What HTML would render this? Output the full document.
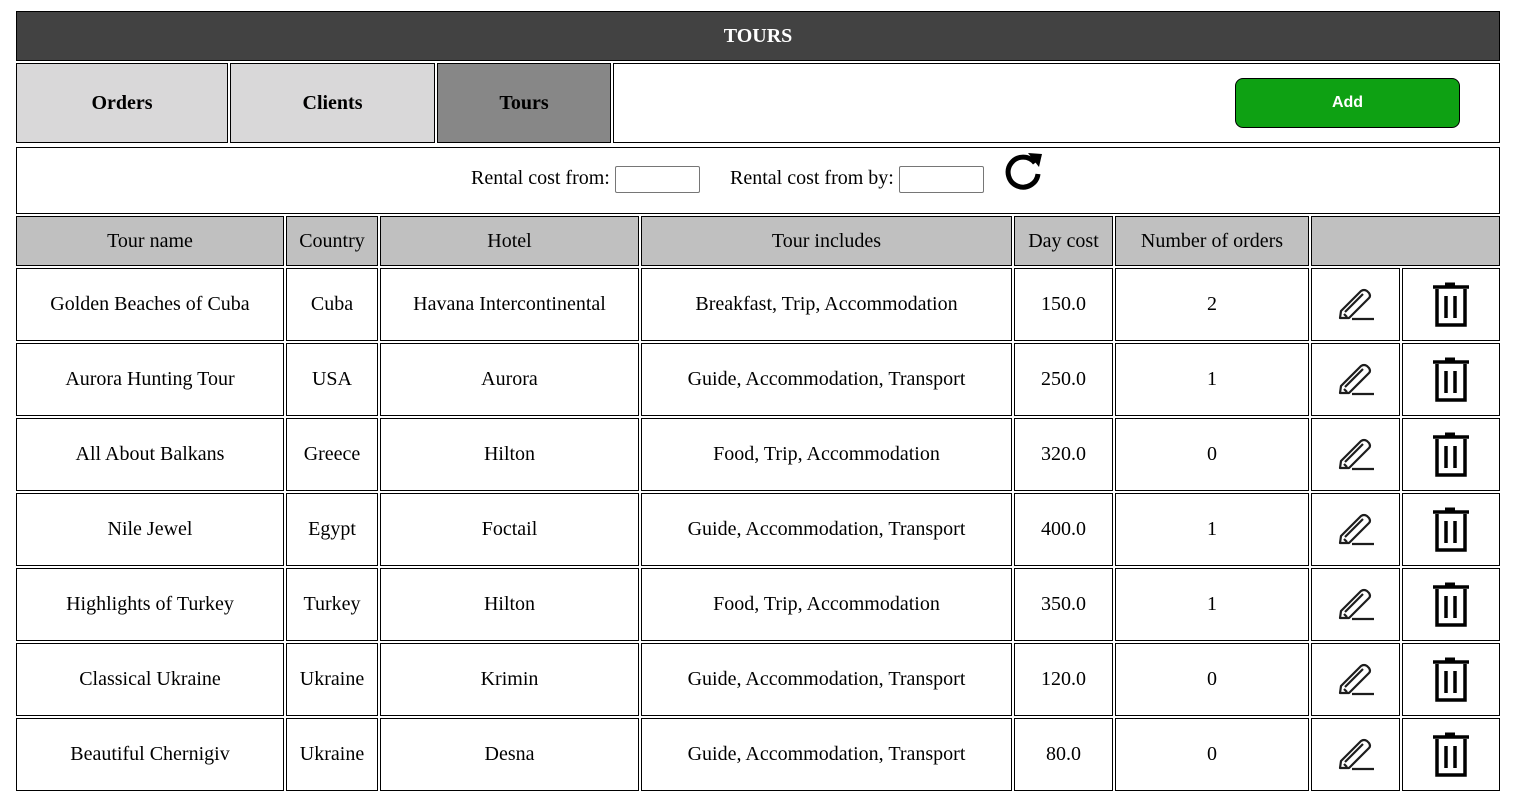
<!DOCTYPE html>
<html><head><meta charset="utf-8"><style>
body{margin:0;width:1513px;height:804px;background:#fff;position:relative;overflow:hidden;font-family:"Liberation Serif",serif;}
.b{position:absolute;box-sizing:border-box;border:1px solid #000;display:flex;align-items:center;justify-content:center;font-size:20px;color:#000;}
.h{background:#c0c0c0;}
.n{font-weight:bold;background:#d9d8d9;}
svg{position:absolute;}
input{position:absolute;box-sizing:border-box;border:1px solid #767676;height:27px;width:85px;border-radius:2px;}
.t{position:absolute;font-size:20px;top:167px;}
</style></head><body>
<div class="b" style="left:16px;top:11px;width:1484px;height:50px;background:#424242;color:#fff;font-weight:bold;">TOURS</div>
<div class="b n" style="left:16px;top:63px;width:212px;height:80px;">Orders</div>
<div class="b n" style="left:230px;top:63px;width:205px;height:80px;">Clients</div>
<div class="b n" style="left:437px;top:63px;width:174px;height:80px;background:#878787;">Tours</div>
<div class="b" style="left:613px;top:63px;width:887px;height:80px;"></div>
<div style="position:absolute;left:1235px;top:78px;width:225px;height:50px;box-sizing:border-box;border:1px solid #000;border-radius:8px;background:#0ea113;color:#fff;font-family:'Liberation Sans',sans-serif;font-weight:bold;font-size:16px;display:flex;align-items:center;justify-content:center;">Add</div>
<div class="b" style="left:16px;top:147px;width:1484px;height:67px;"></div>
<span class="t" style="left:471px;">Rental cost from:</span>
<input style="left:615px;top:166px;">
<span class="t" style="left:730px;">Rental cost from by:</span>
<input style="left:899px;top:166px;">
<svg style="left:1002px;top:150px" width="42" height="42" viewBox="0 0 42 42"><path d="M33 13 A15 15 0 1 0 36 24" fill="none" stroke="#000" stroke-width="5"/><path d="M26 3 L40 4 L37 17 Z" fill="#000"/></svg>

<div class="b h" style="left:16px;top:216px;width:268px;height:50px;">Tour name</div>
<div class="b h" style="left:286px;top:216px;width:92px;height:50px;">Country</div>
<div class="b h" style="left:380px;top:216px;width:259px;height:50px;">Hotel</div>
<div class="b h" style="left:641px;top:216px;width:371px;height:50px;">Tour includes</div>
<div class="b h" style="left:1014px;top:216px;width:99px;height:50px;">Day cost</div>
<div class="b h" style="left:1115px;top:216px;width:194px;height:50px;">Number of orders</div>
<div class="b h" style="left:1311px;top:216px;width:189px;height:50px;"></div>

<div class="b" style="left:16px;top:268px;width:268px;height:73px;">Golden Beaches of Cuba</div>
<div class="b" style="left:286px;top:268px;width:92px;height:73px;">Cuba</div>
<div class="b" style="left:380px;top:268px;width:259px;height:73px;">Havana Intercontinental</div>
<div class="b" style="left:641px;top:268px;width:371px;height:73px;">Breakfast, Trip, Accommodation</div>
<div class="b" style="left:1014px;top:268px;width:99px;height:73px;">150.0</div>
<div class="b" style="left:1115px;top:268px;width:194px;height:73px;">2</div>

<div class="b" style="left:16px;top:343px;width:268px;height:73px;">Aurora Hunting Tour</div>
<div class="b" style="left:286px;top:343px;width:92px;height:73px;">USA</div>
<div class="b" style="left:380px;top:343px;width:259px;height:73px;">Aurora</div>
<div class="b" style="left:641px;top:343px;width:371px;height:73px;">Guide, Accommodation, Transport</div>
<div class="b" style="left:1014px;top:343px;width:99px;height:73px;">250.0</div>
<div class="b" style="left:1115px;top:343px;width:194px;height:73px;">1</div>

<div class="b" style="left:16px;top:418px;width:268px;height:73px;">All About Balkans</div>
<div class="b" style="left:286px;top:418px;width:92px;height:73px;">Greece</div>
<div class="b" style="left:380px;top:418px;width:259px;height:73px;">Hilton</div>
<div class="b" style="left:641px;top:418px;width:371px;height:73px;">Food, Trip, Accommodation</div>
<div class="b" style="left:1014px;top:418px;width:99px;height:73px;">320.0</div>
<div class="b" style="left:1115px;top:418px;width:194px;height:73px;">0</div>

<div class="b" style="left:16px;top:493px;width:268px;height:73px;">Nile Jewel</div>
<div class="b" style="left:286px;top:493px;width:92px;height:73px;">Egypt</div>
<div class="b" style="left:380px;top:493px;width:259px;height:73px;">Foctail</div>
<div class="b" style="left:641px;top:493px;width:371px;height:73px;">Guide, Accommodation, Transport</div>
<div class="b" style="left:1014px;top:493px;width:99px;height:73px;">400.0</div>
<div class="b" style="left:1115px;top:493px;width:194px;height:73px;">1</div>

<div class="b" style="left:16px;top:568px;width:268px;height:73px;">Highlights of Turkey</div>
<div class="b" style="left:286px;top:568px;width:92px;height:73px;">Turkey</div>
<div class="b" style="left:380px;top:568px;width:259px;height:73px;">Hilton</div>
<div class="b" style="left:641px;top:568px;width:371px;height:73px;">Food, Trip, Accommodation</div>
<div class="b" style="left:1014px;top:568px;width:99px;height:73px;">350.0</div>
<div class="b" style="left:1115px;top:568px;width:194px;height:73px;">1</div>

<div class="b" style="left:16px;top:643px;width:268px;height:73px;">Classical Ukraine</div>
<div class="b" style="left:286px;top:643px;width:92px;height:73px;">Ukraine</div>
<div class="b" style="left:380px;top:643px;width:259px;height:73px;">Krimin</div>
<div class="b" style="left:641px;top:643px;width:371px;height:73px;">Guide, Accommodation, Transport</div>
<div class="b" style="left:1014px;top:643px;width:99px;height:73px;">120.0</div>
<div class="b" style="left:1115px;top:643px;width:194px;height:73px;">0</div>

<div class="b" style="left:16px;top:718px;width:268px;height:73px;">Beautiful Chernigiv</div>
<div class="b" style="left:286px;top:718px;width:92px;height:73px;">Ukraine</div>
<div class="b" style="left:380px;top:718px;width:259px;height:73px;">Desna</div>
<div class="b" style="left:641px;top:718px;width:371px;height:73px;">Guide, Accommodation, Transport</div>
<div class="b" style="left:1014px;top:718px;width:99px;height:73px;">80.0</div>
<div class="b" style="left:1115px;top:718px;width:194px;height:73px;">0</div>

<div class="b" style="left:1311px;top:268px;width:89px;height:73px;"><svg style="position:static" width="40" height="34" viewBox="0 0 40 34"><path d="M4 30 L5 23 L25 3 Q28 1 31 3 L33 5 Q35 8 33 10 L13 30 Z M9 24 L27 6 M8 26 L11 29" fill="none" stroke="#1d1d1d" stroke-width="2.2" stroke-linejoin="round"/><path d="M16 31 H38" stroke="#1d1d1d" stroke-width="2.2"/></svg></div>
<div class="b" style="left:1402px;top:268px;width:98px;height:73px;"><svg style="position:static" width="40" height="46" viewBox="0 0 40 46"><path d="M2 5 H38" stroke="#000" stroke-width="3.5"/><path d="M14 2 H24" stroke="#000" stroke-width="3"/><path d="M6 7 V43 H34 V7" fill="none" stroke="#000" stroke-width="3.5"/><path d="M15 14 V36 M24 14 V36" stroke="#000" stroke-width="3.5"/></svg></div>

<div class="b" style="left:1311px;top:343px;width:89px;height:73px;"><svg style="position:static" width="40" height="34" viewBox="0 0 40 34"><path d="M4 30 L5 23 L25 3 Q28 1 31 3 L33 5 Q35 8 33 10 L13 30 Z M9 24 L27 6 M8 26 L11 29" fill="none" stroke="#1d1d1d" stroke-width="2.2" stroke-linejoin="round"/><path d="M16 31 H38" stroke="#1d1d1d" stroke-width="2.2"/></svg></div>
<div class="b" style="left:1402px;top:343px;width:98px;height:73px;"><svg style="position:static" width="40" height="46" viewBox="0 0 40 46"><path d="M2 5 H38" stroke="#000" stroke-width="3.5"/><path d="M14 2 H24" stroke="#000" stroke-width="3"/><path d="M6 7 V43 H34 V7" fill="none" stroke="#000" stroke-width="3.5"/><path d="M15 14 V36 M24 14 V36" stroke="#000" stroke-width="3.5"/></svg></div>

<div class="b" style="left:1311px;top:418px;width:89px;height:73px;"><svg style="position:static" width="40" height="34" viewBox="0 0 40 34"><path d="M4 30 L5 23 L25 3 Q28 1 31 3 L33 5 Q35 8 33 10 L13 30 Z M9 24 L27 6 M8 26 L11 29" fill="none" stroke="#1d1d1d" stroke-width="2.2" stroke-linejoin="round"/><path d="M16 31 H38" stroke="#1d1d1d" stroke-width="2.2"/></svg></div>
<div class="b" style="left:1402px;top:418px;width:98px;height:73px;"><svg style="position:static" width="40" height="46" viewBox="0 0 40 46"><path d="M2 5 H38" stroke="#000" stroke-width="3.5"/><path d="M14 2 H24" stroke="#000" stroke-width="3"/><path d="M6 7 V43 H34 V7" fill="none" stroke="#000" stroke-width="3.5"/><path d="M15 14 V36 M24 14 V36" stroke="#000" stroke-width="3.5"/></svg></div>

<div class="b" style="left:1311px;top:493px;width:89px;height:73px;"><svg style="position:static" width="40" height="34" viewBox="0 0 40 34"><path d="M4 30 L5 23 L25 3 Q28 1 31 3 L33 5 Q35 8 33 10 L13 30 Z M9 24 L27 6 M8 26 L11 29" fill="none" stroke="#1d1d1d" stroke-width="2.2" stroke-linejoin="round"/><path d="M16 31 H38" stroke="#1d1d1d" stroke-width="2.2"/></svg></div>
<div class="b" style="left:1402px;top:493px;width:98px;height:73px;"><svg style="position:static" width="40" height="46" viewBox="0 0 40 46"><path d="M2 5 H38" stroke="#000" stroke-width="3.5"/><path d="M14 2 H24" stroke="#000" stroke-width="3"/><path d="M6 7 V43 H34 V7" fill="none" stroke="#000" stroke-width="3.5"/><path d="M15 14 V36 M24 14 V36" stroke="#000" stroke-width="3.5"/></svg></div>

<div class="b" style="left:1311px;top:568px;width:89px;height:73px;"><svg style="position:static" width="40" height="34" viewBox="0 0 40 34"><path d="M4 30 L5 23 L25 3 Q28 1 31 3 L33 5 Q35 8 33 10 L13 30 Z M9 24 L27 6 M8 26 L11 29" fill="none" stroke="#1d1d1d" stroke-width="2.2" stroke-linejoin="round"/><path d="M16 31 H38" stroke="#1d1d1d" stroke-width="2.2"/></svg></div>
<div class="b" style="left:1402px;top:568px;width:98px;height:73px;"><svg style="position:static" width="40" height="46" viewBox="0 0 40 46"><path d="M2 5 H38" stroke="#000" stroke-width="3.5"/><path d="M14 2 H24" stroke="#000" stroke-width="3"/><path d="M6 7 V43 H34 V7" fill="none" stroke="#000" stroke-width="3.5"/><path d="M15 14 V36 M24 14 V36" stroke="#000" stroke-width="3.5"/></svg></div>

<div class="b" style="left:1311px;top:643px;width:89px;height:73px;"><svg style="position:static" width="40" height="34" viewBox="0 0 40 34"><path d="M4 30 L5 23 L25 3 Q28 1 31 3 L33 5 Q35 8 33 10 L13 30 Z M9 24 L27 6 M8 26 L11 29" fill="none" stroke="#1d1d1d" stroke-width="2.2" stroke-linejoin="round"/><path d="M16 31 H38" stroke="#1d1d1d" stroke-width="2.2"/></svg></div>
<div class="b" style="left:1402px;top:643px;width:98px;height:73px;"><svg style="position:static" width="40" height="46" viewBox="0 0 40 46"><path d="M2 5 H38" stroke="#000" stroke-width="3.5"/><path d="M14 2 H24" stroke="#000" stroke-width="3"/><path d="M6 7 V43 H34 V7" fill="none" stroke="#000" stroke-width="3.5"/><path d="M15 14 V36 M24 14 V36" stroke="#000" stroke-width="3.5"/></svg></div>

<div class="b" style="left:1311px;top:718px;width:89px;height:73px;"><svg style="position:static" width="40" height="34" viewBox="0 0 40 34"><path d="M4 30 L5 23 L25 3 Q28 1 31 3 L33 5 Q35 8 33 10 L13 30 Z M9 24 L27 6 M8 26 L11 29" fill="none" stroke="#1d1d1d" stroke-width="2.2" stroke-linejoin="round"/><path d="M16 31 H38" stroke="#1d1d1d" stroke-width="2.2"/></svg></div>
<div class="b" style="left:1402px;top:718px;width:98px;height:73px;"><svg style="position:static" width="40" height="46" viewBox="0 0 40 46"><path d="M2 5 H38" stroke="#000" stroke-width="3.5"/><path d="M14 2 H24" stroke="#000" stroke-width="3"/><path d="M6 7 V43 H34 V7" fill="none" stroke="#000" stroke-width="3.5"/><path d="M15 14 V36 M24 14 V36" stroke="#000" stroke-width="3.5"/></svg></div>
</body></html>
